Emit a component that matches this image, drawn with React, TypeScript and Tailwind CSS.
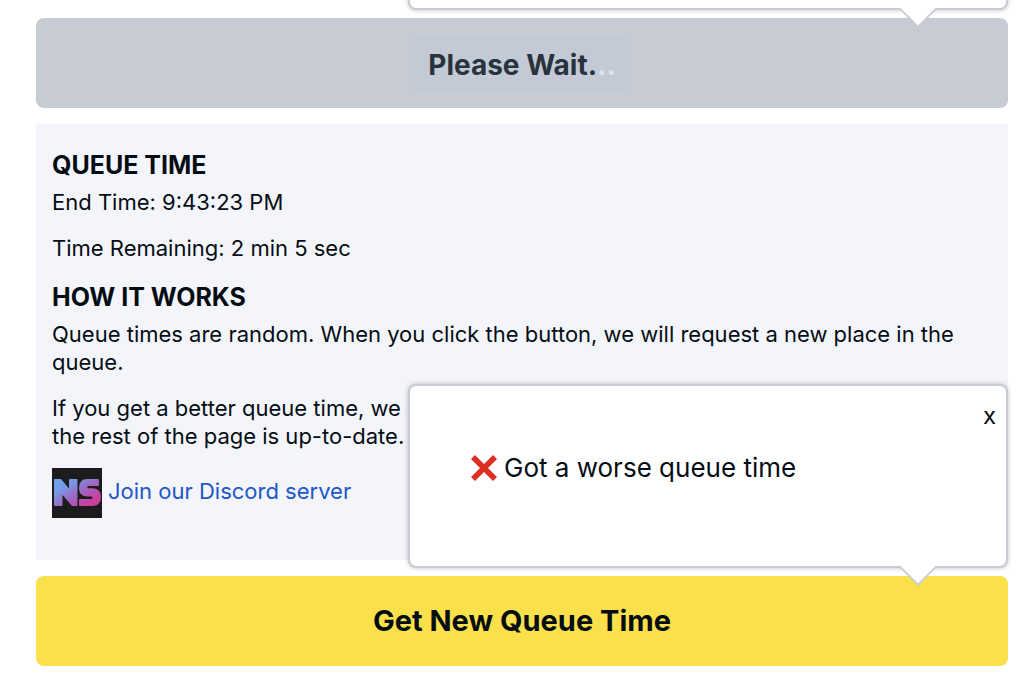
import type { ReactNode } from "react";

function Callout({ children }: { children?: ReactNode }) {
  return (
    <div className="absolute right-0 bottom-full mb-2 h-46 w-150 max-w-full rounded-lg border-2 border-[#c7cbd4] bg-white shadow-[0_0_5px_rgba(0,0,0,0.25)]">
      {children}
      <svg
        className="absolute top-full right-[68px] h-5 w-10"
        viewBox="0 0 40 20"
        aria-hidden="true"
      >
        <path d="M1 0H39V2H38L20 20L2 2H1Z" fill="#c7cbd4" />
        <path d="M2.5 0H37.5L20 17.500Z" fill="#fff" />
      </svg>
    </div>
  );
}

function Logo() {
  return (
    <svg className="size-[50px] shrink-0" viewBox="0 0 50 50" aria-hidden="true">
      <defs>
        <linearGradient id="logo-fill" gradientUnits="userSpaceOnUse" x1="10" y1="6" x2="36" y2="44">
          <stop offset="0" stopColor="#6aa5f2" />
          <stop offset="0.25" stopColor="#769ae8" />
          <stop offset="0.58" stopColor="#a262c0" />
          <stop offset="0.85" stopColor="#c93f9c" />
          <stop offset="1" stopColor="#c93f9c" />
        </linearGradient>
      </defs>
      <rect width="50" height="50" fill="#1c1c1c" />
      <g fill="url(#logo-fill)">
        <path d="M3 11H9L17 20.500V12Q17 11 18 11H24.500Q25.500 11 25.500 12V37Q25.500 38 24.500 38H20L10.500 27V37Q10.500 38 9.500 38H3Q2 38 2 37V12Q2 11 3 11Z" />
        <path d="M46 11Q47 11 47 12V17Q47 18 46 18H36.500Q35.200 18 35.200 19.200Q35.200 20.300 36.500 20.300H40Q49 20.300 49 29Q49 38 40 38H28Q27 38 27 37V32Q27 31 28 31H39Q40.500 31 40.500 29.700Q40.500 28.500 39 28.500H35.500Q27 28.500 27 20Q27 11 35.500 11Z" />
      </g>
    </svg>
  );
}

function Heading({ children }: { children: ReactNode }) {
  return <h2 className="mb-2 pt-0.5 text-[25px] leading-[30px] font-bold">{children}</h2>;
}

export default function App() {
  return (
    <main className="flex flex-col gap-4 overflow-hidden bg-white pt-[18px] pr-3.5 pb-5 pl-9 font-['Inter',sans-serif] text-[#050d14]">
      <div className="relative">
        <button
          type="button"
          disabled
          className="flex h-[90px] w-full items-center justify-center rounded-lg bg-[#c7cbd4] text-[28px] font-bold text-[#28333e]"
        >
          <span className="flex h-14 items-center bg-[#c4cad5] px-3.5 pt-1">
            Please Wait.<span className="text-[#dfe3ea]">..</span>
          </span>
        </button>
        <Callout />
      </div>

      <section className="bg-[#f4f5fa] px-4 pt-6 pb-[42px] text-[22px] leading-7">
        <Heading>QUEUE TIME</Heading>
        <p className="mb-[18px]">End Time: 9:43:23 PM</p>
        <p className="mb-[18px]">Time Remaining: 2 min 5 sec</p>
        <Heading>HOW IT WORKS</Heading>
        <p className="mb-[18px]">
          Queue times are random. When you click the button, we will request a new place in the
          queue.
        </p>
        <p className="mb-[18px]">
          If you get a better queue time, we will
          <br />
          the rest of the page is up-to-date.
        </p>
        <a href="#discord" className="inline-flex items-center gap-1.5 align-top text-[#2057c8]">
          <Logo />
          <span className="-mt-1">Join our Discord server</span>
        </a>
      </section>

      <div className="relative">
        <button
          type="button"
          className="h-[90px] w-full rounded-lg bg-[#fae04b] text-[29px] font-bold"
        >
          Get New Queue Time
        </button>
        <Callout>
          <div className="flex justify-end px-2.5 pt-4">
            <button type="button" aria-label="Close" className="text-2xl leading-7">
              x
            </button>
          </div>
          <p className="flex items-center gap-1.5 px-15 pt-5 text-[26px] leading-9">
            <svg className="h-7 w-7" viewBox="0 0 28 28" aria-hidden="true">
              <path
                d="M1 5L5 1L14 10L23 1L27 5L18 14L27 23L23 27L14 18L5 27L1 23L10 14Z"
                fill="#dd2e22"
              />
            </svg>
            Got a worse queue time
          </p>
        </Callout>
      </div>
    </main>
  );
}
